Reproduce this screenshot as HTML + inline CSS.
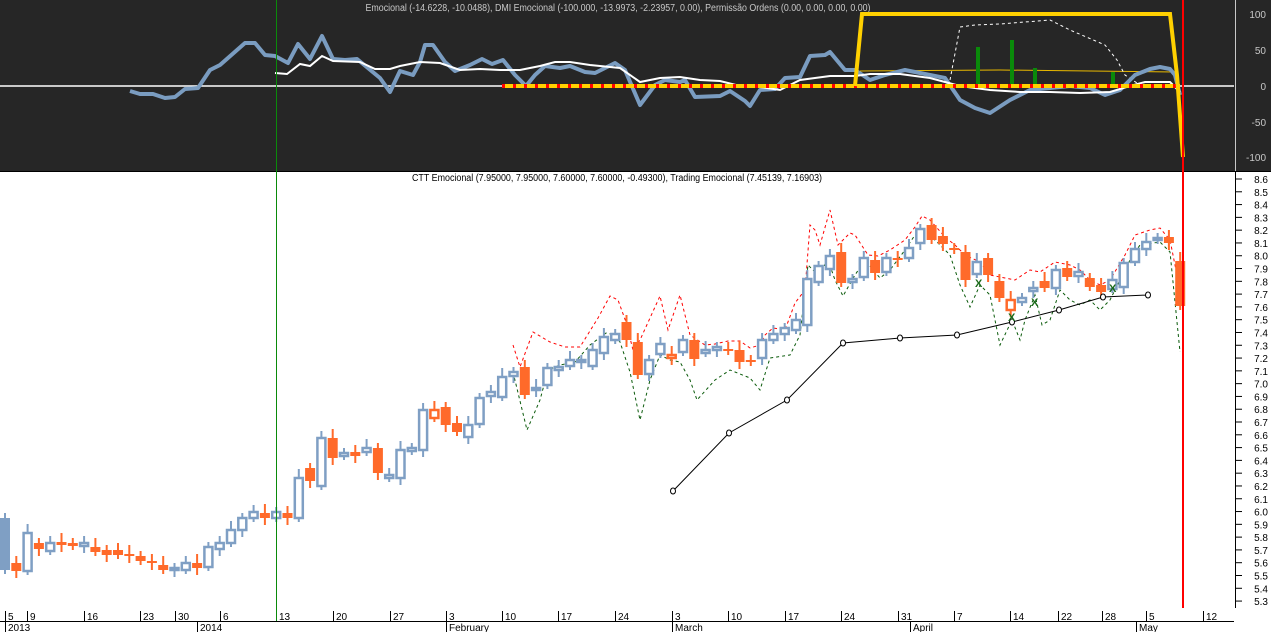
<!DOCTYPE html>
<html><head><meta charset="utf-8"><style>
html,body{margin:0;padding:0;background:#fff;width:1271px;height:632px;overflow:hidden}
svg{display:block;font-family:"Liberation Sans",sans-serif}
</style></head><body>
<svg id="s" width="1271" height="632" xmlns="http://www.w3.org/2000/svg">
<rect x="0" y="0" width="1271" height="171" fill="#262626"/>
<line x1="0" y1="171.5" x2="1271" y2="171.5" stroke="#000"/>
<line x1="0" y1="86" x2="1234" y2="86" stroke="#fff" stroke-width="1.5"/>
<line x1="1235.5" y1="0" x2="1235.5" y2="171" stroke="#c8c8c8"/>
<g fill="#c8c8c8" font-size="10" text-anchor="end">
<text x="1266" y="18">100</text><text x="1266" y="54">50</text><text x="1266" y="90">0</text><text x="1266" y="126">-50</text><text x="1266" y="161">-100</text></g>
<text x="618" y="11" fill="#c8c8c8" font-size="10" text-anchor="middle" textLength="505" lengthAdjust="spacingAndGlyphs">Emocional (-14.6228, -10.0488), DMI Emocional (-100.000, -13.9973, -2.23957, 0.00), Permissão Ordens (0.00, 0.00, 0.00, 0.00)</text>
<g id="top"></g>
<text x="617" y="181" fill="#000" font-size="10" text-anchor="middle" textLength="410" lengthAdjust="spacingAndGlyphs">CTT Emocional (7.95000, 7.95000, 7.60000, 7.60000, -0.49300), Trading Emocional (7.45139, 7.16903)</text>
<line x1="1235.5" y1="172" x2="1235.5" y2="608" stroke="#000"/>
<g id="rax" fill="#000" font-size="10" text-anchor="end"></g>
<line x1="0" y1="621.5" x2="1234" y2="621.5" stroke="#000"/>
<g id="bax" fill="#000" font-size="10"></g>
<g id="main"></g>
<line x1="276.5" y1="0" x2="276.5" y2="621" stroke="#0a8a0a"/>
<line x1="1183" y1="0" x2="1183" y2="608" stroke="#ff0000" stroke-width="2"/>
</svg>
<script>
var NS="http://www.w3.org/2000/svg";
function el(p,t,a,txt){var e=document.createElementNS(NS,t);for(var k in a)e.setAttribute(k,a[k]);if(txt!=null)e.textContent=txt;document.getElementById(p).appendChild(e);return e;}
function pts(a){return a.map(function(p){return p.join(",")}).join(" ");}
for(var k=0;k<=33;k++){var y=179+k*12.79;var v=(8.6-k*0.1).toFixed(1);
el("rax","line",{x1:1236,y1:y,x2:1242,y2:y,stroke:"#000"});
el("rax","text",{x:1268,y:y+4},v);}
var days=[["5",5],["9",27],["16",84],["23",140],["30",175],["6",220],["13",276],["20",333],["27",390],["3",446],["10",502],["17",558],["24",615],["3",672],["10",728],["17",785],["24",841],["31",898],["7",954],["14",1010],["22",1058],["28",1102],["5",1146],["12",1203]];
days.forEach(function(d){el("bax","line",{x1:d[1]+.5,y1:611,x2:d[1]+.5,y2:621,stroke:"#000"});el("bax","text",{x:d[1]+3,y:620},d[0]);});
[["2013",5],["2014",197],["February",446],["March",672],["April",910],["May",1136]].forEach(function(d){el("bax","line",{x1:d[1]+.5,y1:621,x2:d[1]+.5,y2:632,stroke:"#000"});el("bax","text",{x:d[1]+3,y:631},d[0]);});
var blue=[[130,91],[140,94],[153,94],[165,98],[175,97],[185,89],[198,88],[210,70],[220,65],[245,43],[255,43],[265,55],[275,56],[288,63],[298,44],[310,59],[322,36],[333,59],[345,60],[357,59],[380,78],[390,92],[400,71],[413,75],[420,62],[425,45],[433,45],[445,62],[455,71],[470,65],[482,59],[492,64],[503,60],[515,75],[526,86],[535,75],[545,66],[560,68],[570,66],[585,72],[595,73],[615,63],[625,70],[640,105],[655,85],[665,80],[680,82],[685,80],[695,97],[720,96],[730,91],[745,101],[750,106],[760,90],[775,89],[785,78],[800,77],[810,56],[825,55],[830,52],[845,70],[855,70],[870,80],[885,75],[905,70],[925,74],[945,78],[960,100],[975,108],[990,113],[1010,100],[1030,90],[1050,88],[1070,86],[1090,88],[1105,95],[1120,90],[1135,75],[1150,69],[1160,67],[1170,69],[1175,75],[1180,95]];
var white=[[275,73],[287,74],[300,64],[310,66],[322,56],[333,61],[360,62],[375,69],[390,69],[400,66],[420,62],[440,63],[460,70],[480,69],[500,70],[520,70],[540,66],[555,62],[570,62],[590,65],[620,68],[640,82],[660,78],[680,77],[700,80],[720,81],[740,86],[760,87],[780,90],[800,80],[830,76],[855,76],[870,74],[900,74],[930,78],[960,86],[990,90],[1020,92],[1050,92],[1080,93],[1110,92],[1130,86],[1145,82],[1170,82],[1180,92]];
el("top","polyline",{points:pts([[860,71],[1000,70],[1175,72]]),fill:"none",stroke:"#e8b800","stroke-width":1});
el("top","polyline",{points:pts([[950,80],[960,27],[975,25],[1000,24],[1050,20],[1070,30],[1105,45],[1117,60],[1125,75],[1140,85]]),fill:"none",stroke:"#fff","stroke-dasharray":"3,3"});
[[978,47],[1012,40],[1035,68],[1113,72]].forEach(function(g){el("top","rect",{x:g[0]-2,y:g[1],width:4,height:86-g[1],fill:"#0a8a0a"});});
el("top","polyline",{points:pts(blue),fill:"none",stroke:"#7a9cc0","stroke-width":4,"stroke-linejoin":"round"});
el("top","polyline",{points:pts(white),fill:"none",stroke:"#fff","stroke-width":2});
el("top","line",{x1:502,y1:86,x2:1180,y2:86,stroke:"#ffd000","stroke-width":4});
el("top","line",{x1:502,y1:86,x2:1180,y2:86,stroke:"#f00","stroke-width":4,"stroke-dasharray":"3,8"});
el("top","polyline",{points:pts([[855,86],[862,14],[1170,14],[1177,75],[1183,157]]),fill:"none",stroke:"#ffd000","stroke-width":4});
var up=[[513,345],[520,367],[533,332],[550,342],[565,347],[580,347],[598,318],[610,296],[618,300],[626,322],[633,350],[640,340],[660,296],[668,330],[680,295],[690,335],[705,345],[715,344],[728,341],[740,341],[750,348],[760,345],[765,335],[773,328],[785,330],[795,303],[805,290],[810,225],[815,230],[820,245],[830,210],[838,245],[850,233],[855,235],[868,255],[878,256],[890,250],[905,240],[915,227],[922,216],[930,220],[945,237],[955,245],[965,255],[980,262],[990,275],[1005,278],[1015,280],[1030,270],[1040,272],[1055,262],[1070,265],[1080,270],[1090,280],[1100,285],[1110,280],[1125,255],[1135,235],[1150,230],[1160,228],[1170,240],[1183,305]];
var lo=[[513,372],[527,430],[540,400],[548,370],[560,365],[575,362],[590,345],[606,333],[615,335],[620,342],[630,372],[640,420],[650,380],[660,355],[670,360],[680,362],[690,380],[697,400],[715,380],[730,370],[735,372],[750,378],[760,390],[770,358],[790,355],[800,335],[808,265],[818,275],[828,260],[835,280],[843,296],[855,275],[865,260],[880,278],[890,270],[905,250],[915,235],[925,235],[935,240],[950,255],[960,285],[970,307],[980,285],[990,295],[1000,345],[1012,320],[1020,340],[1025,320],[1035,295],[1042,325],[1050,320],[1060,290],[1070,300],[1080,305],[1090,300],[1100,310],[1110,300],[1120,280],[1130,260],[1140,245],[1160,242],[1170,252],[1180,352]];
el("main","polyline",{points:pts(up),fill:"none",stroke:"#f00","stroke-dasharray":"3,3"});
el("main","polyline",{points:pts(lo),fill:"none",stroke:"#0a5a0a","stroke-dasharray":"3,3"});
var c=[[518,570,"B"],[563,571,"o"],[533,571,"b"],[543,549,"o"],[543,551,"b"],[542,545,"o"],[543,546,"o"],[543,546,"b"],[547,552,"o"],[550,555,"o"],[550,555,"o"],[554,556,"o"],[556,561,"o"],[561,563,"o"],[565,570,"o"],[568,570,"b"],[563,570,"b"],[563,568,"o"],[547,567,"b"],[543,549,"b"],[530,543,"b"],[518,530,"b"],[512,518,"b"],[513,518,"o"],[512,518,"b"],[513,518,"o"],[478,518,"b"],[468,481,"o"],[438,486,"b"],[438,458,"o"],[453,456,"b"],[452,456,"o"],[448,452,"b"],[448,473,"o"],[475,478,"b"],[450,478,"b"],[448,451,"b"],[410,450,"b"],[410,418,"h"],[407,425,"o"],[423,432,"o"],[425,437,"b"],[398,424,"b"],[392,396,"b"],[377,397,"b"],[372,376,"b"],[367,395,"o"],[388,390,"b"],[368,385,"b"],[367,370,"b"],[360,366,"b"],[360,362,"b"],[350,366,"b"],[337,353,"b"],[334,340,"b"],[322,340,"o"],[342,375,"o"],[360,374,"b"],[344,354,"b"],[355,358,"h"],[340,352,"b"],[340,359,"o"],[350,353,"b"],[347,350,"b"],[349,351,"o"],[350,362,"o"],[360,362,"o"],[340,358,"b"],[334,340,"b"],[328,334,"b"],[320,330,"b"],[279,325,"b"],[266,282,"b"],[256,269,"b"],[252,283,"o"],[279,282,"b"],[258,277,"b"],[260,273,"o"],[258,272,"b"],[258,260,"o"],[248,258,"b"],[229,243,"b"],[225,240,"o"],[236,244,"o"],[248,250,"o"],[252,280,"o"],[262,274,"b"],[258,275,"o"],[281,298,"o"],[300,310,"h"],[298,302,"b"],[288,291,"b"],[281,288,"o"],[270,288,"b"],[268,277,"o"],[272,276,"b"],[278,287,"o"],[285,292,"o"],[280,289,"b"],[263,287,"b"],[249,262,"b"],[242,249,"b"],[238,240,"b"],[237,243,"o"],[261,306,"o"]];
var BL="#7f9fc4",OR="#ff6a2a";
c.forEach(function(d,i){var x=5+11.3*i;var col=(d[2]=="b"||d[2]=="B")?BL:OR;
var wt=d[0]-5-(i%3)*2,wb=d[1]+4+(i%2)*3;
el("main","line",{x1:x,y1:wt,x2:x,y2:wb,stroke:col,"stroke-width":2});
var h=Math.max(d[1]-d[0],2);
if(d[2]=="b"||d[2]=="h")el("main","rect",{x:x-4,y:d[0],width:8,height:h,fill:"#fff",stroke:col,"stroke-width":2.5});
else el("main","rect",{x:x-5,y:d[0],width:10,height:h,fill:col});});
var blk=[[673,491],[729,433],[787,400],[843,343],[900,338],[957,335],[1012,322],[1059,310],[1103,297],[1148,295]];
el("main","polyline",{points:pts(blk),fill:"none",stroke:"#000","stroke-width":1});
blk.forEach(function(p){el("main","ellipse",{cx:p[0],cy:p[1],rx:2.5,ry:3,fill:"#fff",stroke:"#000"});});
[[979,283],[1012,317],[1035,302],[1113,288]].forEach(function(p){el("main","text",{x:p[0]-4,y:p[1]+4,fill:"#1a6a1a","font-size":"11","font-weight":"bold"},"X");});
</script>
</body></html>
